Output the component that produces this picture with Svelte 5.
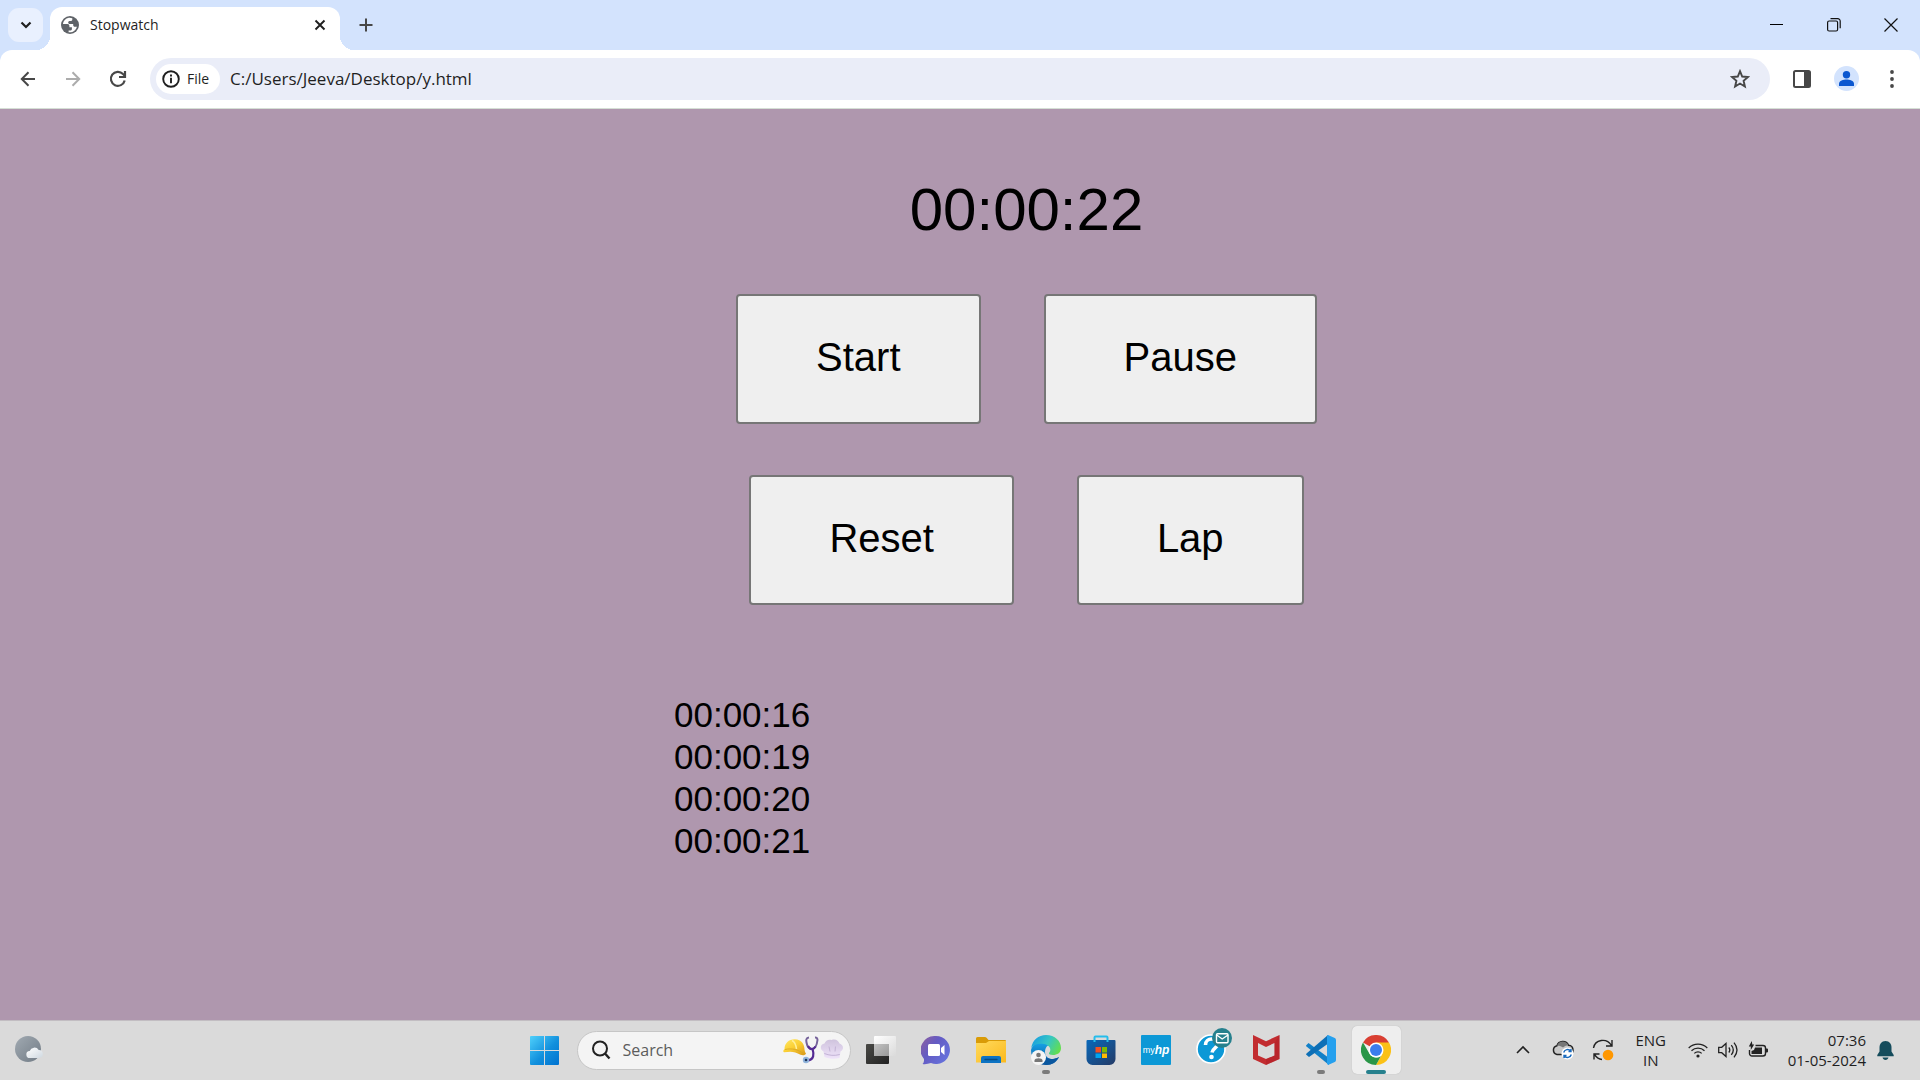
<script>
  let address = $state('C:/Users/Jeeva/Desktop/y.html');
  let query = $state('');
  let elapsed = $state('00:00:22');
  const laps = ['00:00:16', '00:00:19', '00:00:20', '00:00:21'];
</script>

<div class="screen">
  <header>
    <div class="tabstrip">
      <button class="tab-search" aria-label="Search tabs">
        <svg width="20" height="20" viewBox="0 0 20 20"><path d="M5.500 7.500 10 12l4.500-4.500" fill="none" stroke="#1f1f1f" stroke-width="2.200" /></svg>
      </button>
      <div class="tab">
        <svg width="18" height="18" viewBox="0 0 18 18">
          <circle cx="9" cy="9" r="9" fill="#5f6368" />
          <path d="M7.800 1.800C4.500 2.500 2.300 5 1.900 8l4.600.1c1.300 0 1.900.8 1.900 1.900v1.200h2.500v1.700c0 1-.8 1.500-1.900 1.500H7.600v1.800c4 .6 7.400-2 8.300-5.500h-2c-1.100 0-1.700-.8-1.700-1.800V7.900H8.900c-1.200 0-1.700-.7-1.700-1.500 0-1 .7-1.500 1.700-1.500h1.200c.8 0 1.200-.6 1.200-1.300V2.300c-1.200-.5-2.300-.7-3.500-.5z" fill="#fff" />
        </svg>
        <span class="tab-title">Stopwatch</span>
        <button class="icon small" aria-label="Close tab">
          <svg width="12" height="12" viewBox="0 0 12 12"><path d="m1.500 1.500 9 9m0-9-9 9" stroke="#1f1f1f" stroke-width="1.900" /></svg>
        </button>
      </div>
      <button class="icon new-tab" aria-label="New tab">
        <svg width="14" height="14" viewBox="0 0 14 14"><path d="M7 .5v13M.5 7h13" stroke="#474747" stroke-width="2" /></svg>
      </button>
      <div class="window-buttons">
        <button aria-label="Minimize"><svg width="14" height="14" viewBox="0 0 14 14"><path d="M0 6.500h13" stroke="#000" /></svg></button>
        <button aria-label="Restore"><svg width="14" height="14" viewBox="0 0 14 14" fill="none" stroke="#111" stroke-width="1.200"><rect x=".6" y="3" width="10" height="10" rx="1.500" /><path d="M3.500.7h7.200a2.500 2.500 0 0 1 2.500 2.500v7" /></svg></button>
        <button aria-label="Close"><svg width="14" height="14" viewBox="0 0 14 14"><path d="m.5.5 13 13m0-13-13 13" stroke="#111" stroke-width="1.200" /></svg></button>
      </div>
    </div>
    <div class="toolbar">
      <button class="nav" aria-label="Back"><svg width="16" height="16" viewBox="0 0 16 16" fill="none" stroke="#474747" stroke-width="2"><path d="M15 8H2M8.500 1.300 1.800 8l6.700 6.700" /></svg></button>
      <button class="nav" aria-label="Forward" disabled><svg width="16" height="16" viewBox="0 0 16 16" fill="none" stroke="#acacac" stroke-width="2"><path d="M1 8h13M7.500 1.300 14.200 8l-6.700 6.700" /></svg></button>
      <button class="nav" aria-label="Reload"><svg width="18" height="18" viewBox="0 0 18 18" fill="none" stroke="#474747" stroke-width="2.200"><path d="M15.700 10.500A7 7 0 1 1 14 4l2 2" /><path d="M16 1v6h-6" /></svg></button>
      <div class="omnibox">
        <button class="chip">
          <svg width="18" height="18" viewBox="0 0 18 18"><circle cx="9" cy="9" r="7.800" fill="none" stroke="#1f1f1f" stroke-width="1.900" /><path d="M9 7.800v5.400M9 4.600v2" stroke="#1f1f1f" stroke-width="1.900" /></svg>
          File
        </button>
        <input class="address" aria-label="Address" spellcheck="false" bind:value={address} />
        <button class="icon" aria-label="Bookmark this page">
          <svg width="20" height="20" viewBox="0 0 20 20"><path d="m10 2.200 2.200 5.300 5.700.5-4.300 3.800 1.300 5.700-4.900-3-4.900 3 1.300-5.700L2.100 8l5.700-.5z" fill="none" stroke="#474747" stroke-width="1.900" /></svg>
        </button>
      </div>
      <div class="actions">
        <button class="icon" aria-label="Side panel"><svg width="18" height="18" viewBox="0 0 18 18"><rect x="1" y="1" width="16" height="16" rx="1.500" fill="none" stroke="#474747" stroke-width="2" /><path d="M11 1h6v16h-6z" fill="#474747" /></svg></button>
        <button class="icon" aria-label="Profile"><svg width="25" height="25" viewBox="0 0 25 25"><circle cx="12.500" cy="12.500" r="12.500" fill="#d3e3fd" /><circle cx="12.500" cy="8.700" r="3.700" fill="#0b57d0" /><path d="M5 20v-2.200c0-3 4.500-4.300 7.500-4.300s7.500 1.300 7.500 4.300V20z" fill="#0b57d0" /></svg></button>
        <button class="icon" aria-label="Menu"><svg width="18" height="18" viewBox="0 0 18 18" fill="#474747"><circle cx="9" cy="2" r="1.900" /><circle cx="9" cy="9" r="1.900" /><circle cx="9" cy="16" r="1.900" /></svg></button>
      </div>
    </div>
  </header>

  <main>
    <div class="stopwatch">
      <div class="time">{elapsed}</div>
      <div class="row">
        <button class="control">Start</button>
        <button class="control">Pause</button>
      </div>
      <div class="row">
        <button class="control">Reset</button>
        <button class="control">Lap</button>
      </div>
      <ul>
        {#each laps as lap}
          <li>{lap}</li>
        {/each}
      </ul>
    </div>
  </main>

  <footer>
    <button class="weather" aria-label="Weather">
      <svg width="28" height="28" viewBox="0 0 28 28">
        <defs>
          <linearGradient id="moon" x1="0" y1="0" x2="1" y2="1"><stop stop-color="#a1aab2" /><stop offset="1" stop-color="#717b85" /></linearGradient>
          <linearGradient id="cloud" x1="0" y1="0" x2="1" y2="1"><stop stop-color="#fff" /><stop offset="1" stop-color="#cfd8e0" /></linearGradient>
        </defs>
        <circle cx="13" cy="13" r="13" fill="url(#moon)" />
        <path d="M15 22a3.500 3.500 0 0 1-.3-7 5 5 0 0 1 9-1 4 4 0 0 1 .3 8z" fill="url(#cloud)" />
      </svg>
    </button>

    <nav class="apps" aria-label="Taskbar">
      <button class="app" aria-label="Start menu">
        <svg width="29" height="29" viewBox="0 0 29 29">
          <defs><linearGradient id="win" gradientUnits="userSpaceOnUse" x1="0" y1="0" x2="29" y2="29"><stop stop-color="#4fd0fb" /><stop offset=".55" stop-color="#1290dd" /><stop offset="1" stop-color="#0072d0" /></linearGradient></defs>
          <path d="M1 0h13v14H0V1a1 1 0 0 1 1-1zM15 0h13a1 1 0 0 1 1 1v13H15zM0 15h14v14H1a1 1 0 0 1-1-1zM15 15h14v13a1 1 0 0 1-1 1H15z" fill="url(#win)" />
        </svg>
      </button>
      <label class="search">
        <svg width="20" height="20" viewBox="0 0 20 20" fill="none" stroke="#222"><circle cx="9" cy="8.500" r="7" stroke-width="2" /><path d="m14 13.500 4.500 5" stroke-width="2.400" /></svg>
        <input aria-label="Search" placeholder="Search" bind:value={query} />
        <svg width="61" height="28" viewBox="0 0 61 28">
          <defs>
            <linearGradient id="hat" x1="0" y1="0" x2=".8" y2="1"><stop stop-color="#ffe866" /><stop offset=".5" stop-color="#fbd035" /><stop offset="1" stop-color="#dfa01c" /></linearGradient>
            <linearGradient id="chef" x1="0" y1="0" x2="0" y2="1"><stop stop-color="#cfc3dd" /><stop offset="1" stop-color="#efe3fa" /></linearGradient>
          </defs>
          <path d="M1.500 13C1.500 7 6 3 12 3.200c6.500.3 9.500 5 9.500 10.300.2 2 .8 3 1.500 4-.5 1.700-3 2.300-5.500 1.300C12 15.500 8 15 1 16.300-.3 15.500.3 14 1.500 13z" fill="url(#hat)" />
          <path d="M9 4.500c3 1.500 4 4.500 4.500 8.500" fill="none" stroke="#fff09a" stroke-width="1.500" />
          <path d="M2 13.500c7-1.500 13 0 18.500 4" fill="none" stroke="#d6a425" stroke-width=".8" />
          <path d="M26 1.500c-3 .4-3 2.500-2.500 5 .7 4 3 6.500 5.500 6.500 4 0 5-5 5.500-9 0-2-1-2.600-2.500-2.500" fill="none" stroke="#75629a" stroke-width="2" />
          <path d="M25 10c2 4 5.500 4 7.500.5m-3 2c1.500 5.500 2 11.500-5.500 12" fill="none" stroke="#542a94" stroke-width="2.200" />
          <circle cx="23" cy="24" r="3.200" fill="#91b4dc" /><circle cx="23" cy="24" r="1.300" fill="#1d3659" />
          <path d="m41.500 21-1-5.500C36.500 13.500 37 8 41.500 7.500 42.500 4 46 3 48.500 4c4-1.500 7 .5 8 3.500 4.500 1.500 4.500 6.500 1 8l-1 6.500c-5 1.300-10 1-15-1z" fill="url(#chef)" />
          <path d="M41.300 17.500c5 2 10 2.500 15.500 1M46 10.500l1 5m5.500-5-.5 5" fill="none" stroke="#c3b3d6" />
        </svg>
      </label>
      <button class="app" aria-label="Task view">
        <svg width="30" height="30" viewBox="0 0 30 30">
          <defs>
            <linearGradient id="dark" x1="0" y1="0" x2="1" y2="1"><stop stop-color="#494946" /><stop offset="1" stop-color="#222" /></linearGradient>
            <linearGradient id="glass" x1="0" y1="0" x2="1" y2="1"><stop stop-color="#fff" /><stop offset="1" stop-color="#dadada" /></linearGradient>
            <linearGradient id="overlap" x1="0" y1="0" x2="1" y2="1"><stop stop-color="#c2c2c2" /><stop offset="1" stop-color="#999" /></linearGradient>
          </defs>
          <rect y="9" width="23" height="20" rx="1" fill="url(#dark)" />
          <rect x="8" y="1" width="22" height="20" rx="1" fill="url(#glass)" />
          <path d="M8 9h15v12H8z" fill="url(#overlap)" />
        </svg>
      </button>
      <button class="app" aria-label="Chat">
        <svg width="30" height="30" viewBox="0 0 30 30">
          <defs><linearGradient id="chat" x1="0" y1="0" x2="1" y2=".7"><stop stop-color="#91609d" /><stop offset=".45" stop-color="#645bc3" /><stop offset="1" stop-color="#6672dc" /></linearGradient></defs>
          <path d="M15 1a14 14 0 1 1-5 27.100C7 29 4 29.500 1.500 29c1.300-1.500 1.700-3 1.500-5A14 14 0 0 1 15 1z" fill="url(#chat)" />
          <rect x="7" y="9" width="12" height="12" rx="1.500" fill="#fff" /><path d="m20 13 3.500-3v10L20 17z" fill="#fff" />
        </svg>
      </button>
      <button class="app" aria-label="File Explorer">
        <svg width="30" height="30" viewBox="0 0 30 30">
          <defs><linearGradient id="folder" x1="0" y1="0" x2="1" y2="1"><stop stop-color="#ffda5d" /><stop offset="1" stop-color="#fbb91d" /></linearGradient></defs>
          <path d="M0 3.500A1.500 1.500 0 0 1 1.500 2H9c1 0 2 1 3.500 3H29a1 1 0 0 1 1 1v3H0z" fill="#d99b07" />
          <path d="M0 8h10l3-2h17v21.500H0z" fill="url(#folder)" />
          <path d="M5 28v-5a2 2 0 0 1 2-2h16a2 2 0 0 1 2 2v5z" fill="#0d73c3" /><path d="M9 24.500h12" stroke="#064b83" stroke-width="1.300" stroke-linecap="round" />
        </svg>
      </button>
      <button class="app running" aria-label="Edge">
        <svg width="30" height="30" viewBox="0 0 30 30">
          <defs>
            <linearGradient id="edgeTop" x1="0" y1=".3" x2="1" y2=".7"><stop stop-color="#199ee0" /><stop offset=".5" stop-color="#35c6c4" /><stop offset="1" stop-color="#66df49" /></linearGradient>
            <linearGradient id="edgeLow" x1="0" y1="0" x2="0" y2="1"><stop stop-color="#16a5e8" /><stop offset="1" stop-color="#0b549e" /></linearGradient>
          </defs>
          <path d="M0 15c0 9 6.500 15 15 15 6 0 11-3 13-8-6 4-14 2-14-5 0-6 4-7 4-7C12 5 2 7 0 15z" fill="url(#edgeLow)" />
          <path d="M12 15c-2 7 6 12 16 7-3 5-7 8-13 8-7-3-7-11-3-15z" fill="#0a579f" />
          <path d="M.2 13C1.500 5 7.500 0 15 0c9 0 15 6 15 13 0 5-4 7-8 7-3 0-4.500-1-4-2 3-3 1-8-5-9C8 8 3 9 .2 13z" fill="url(#edgeTop)" />
          <circle cx="7.500" cy="22.500" r="7.500" fill="#f5f5f5" /><circle cx="7.500" cy="20" r="2.300" fill="#777" /><path d="M3.500 27v-1.500c0-3 8-3 8 0V27z" fill="#777" />
        </svg>
      </button>
      <button class="app" aria-label="Microsoft Store">
        <svg width="30" height="30" viewBox="0 0 30 30">
          <defs><linearGradient id="store" x1="0" y1="0" x2="1" y2="1"><stop stop-color="#0868ba" /><stop offset="1" stop-color="#253b66" /></linearGradient></defs>
          <path d="M1.500 5h27a1 1 0 0 1 1 1v18a6 6 0 0 1-6 6h-17a6 6 0 0 1-6-6V6a1 1 0 0 1 1-1z" fill="url(#store)" />
          <path d="M8.500 7V2.500a1 1 0 0 1 1-1h11a1 1 0 0 1 1 1V7" fill="none" stroke="#25bdec" stroke-width="2" />
          <path d="M9.500 12H15v5.500H9.500z" fill="#f25022" /><path d="M16 12h5v5.500h-5z" fill="#7fba00" /><path d="M9.500 18.500H15V23H9.500z" fill="#00a4ef" /><path d="M16 18.500h5V23h-5z" fill="#ffb900" />
        </svg>
      </button>
      <button class="app" aria-label="myHP"><span class="hp">my<b>hp</b></span></button>
      <button class="app" aria-label="HP Support">
        <svg class="wide" width="36" height="40" viewBox="0 0 36 40">
          <circle cx="15" cy="22" r="14" fill="#0c98d6" stroke="#fff" stroke-width="1.600" />
          <path d="M9.500 18c0-4 3-6 6-6 4 0 6 2 6 5 0 4-5 4-5.500 8.500" fill="none" stroke="#fff" stroke-width="3.600" /><circle cx="15.500" cy="30" r="2.300" fill="#fff" />
          <circle cx="26" cy="11" r="10" fill="#26808d" />
          <rect x="20.500" y="6.800" width="11.500" height="9" rx="1" fill="none" stroke="#fff" stroke-width="1.400" /><path d="m20.700 8 5.500 4L32 8" fill="none" stroke="#fff" stroke-width="1.400" />
        </svg>
      </button>
      <button class="app" aria-label="McAfee">
        <svg width="30" height="30" viewBox="0 0 30 30"><path fill-rule="evenodd" d="m2 0 13 6.200L28.500 0v24L15 30 2 24zM7 8v12.500l8 3.600 8.500-3.600V8L15 12z" fill="#c22c30" /><path d="M28.500 0v24L15 30v-5.900l8.500-3.600V8z" fill="#a91b22" opacity=".35" /></svg>
      </button>
      <button class="app running" aria-label="Visual Studio Code">
        <svg width="30" height="30" viewBox="0 0 30 30">
          <path d="M0 10.500 2.500 8 23 23v7L.5 11.500z" fill="#1180c8" /><path d="M.5 18.500 22 0l1 8L3 22 0 19.500z" fill="#0d6fb6" /><path d="m22 0 6.800 3q1.200.5 1.200 2v20q0 1.500-1.200 2L22 30l-1-1.500V1z" fill="#25a0ee" />
        </svg>
      </button>
      <button class="app active" aria-label="Chrome">
        <svg width="30" height="30" viewBox="0 0 30 30">
          <path d="M15 15 2 7.500a15 15 0 0 1 26 0z" fill="#d93f32" />
          <path d="M15 7.500h13A15 15 0 0 1 15 30l6.500-11.300z" fill="#fbc116" />
          <path d="M2 7.500 8.500 18.700c1.500 2.600 4 3.800 6.500 3.800 2.200 0 4-.5 5-1.500L15 30A15 15 0 0 1 2 7.500z" fill="#2a9648" />
          <circle cx="15" cy="15" r="7.500" fill="#fff" /><circle cx="15" cy="15" r="6" fill="#3b7ded" />
        </svg>
      </button>
    </nav>

    <div class="tray">
      <button class="tray-icon" aria-label="Hidden icons"><svg width="14" height="10" viewBox="0 0 14 10"><path d="m1 8 6-6 6 6" fill="none" stroke="#222" stroke-width="1.600" /></svg></button>
      <button class="tray-icon" aria-label="OneDrive">
        <svg width="22" height="20" viewBox="0 0 22 20">
          <path d="M5 14.500a4.500 4.500 0 0 1 0-8.800c1.500-5 9-6 11.500-.5 3 0 4.500 2.500 4.500 5a4 4 0 0 1-4 4.300z" fill="#c9c9c9" stroke="#222" stroke-width="1.500" />
          <path d="M5 5.700c2-5.500 9-5.500 11.500-.5-3 0-4 1-5.500 2.300C9 5.800 7 5.500 5 5.700z" fill="#777" />
          <circle cx="15.500" cy="13.500" r="6" fill="#fff" /><path d="M11.700 12.500a4 4 0 0 1 7-1.500M19 9v2.500h-2.500m2.800 3a4 4 0 0 1-7 1.500M12 18v-2.500h2.500" fill="none" stroke="#1769bd" stroke-width="1.400" />
        </svg>
      </button>
      <button class="tray-icon" aria-label="Windows Update">
        <svg width="22" height="22" viewBox="0 0 22 22" fill="none" stroke="#222" stroke-width="1.400"><path d="M1.500 9C3 .5 14.500-1.500 19.500 6.500M20 1v6h-6M10 20.500c-3-.2-5.500-2-7.500-5M2 20.500v-5.500h5.500" /><circle cx="16" cy="16" r="5.300" fill="#ff9700" stroke="none" /></svg>
      </button>
      <button class="language">ENG<br />IN</button>
      <button class="status" aria-label="Network, volume and battery">
        <svg width="20" height="18" viewBox="0 0 20 18" fill="none" stroke="#222" stroke-width="1.300"><path d="M.7 7a13 13 0 0 1 18.600 0M3.500 9.700a9.300 9.300 0 0 1 13 0M6.300 12.400a5.300 5.300 0 0 1 7.400 0" /><circle cx="10" cy="15" r="1.600" fill="#222" stroke="none" /></svg>
        <svg width="20" height="18" viewBox="0 0 20 18" fill="none" stroke="#222" stroke-width="1.300"><path d="M.7 6.300h3L8 2.500v13l-4.300-3.800h-3zM10.800 6.500q2 2.500 0 5M13.300 4.200q4 4.800 0 9.600M16 1.700q6 7.300 0 14.600" /></svg>
        <svg width="20" height="18" viewBox="0 0 20 18"><path d="M7.500 4.500H15A2.500 2.500 0 0 1 17.500 7v5.500A2.500 2.500 0 0 1 15 15H4a2.500 2.500 0 0 1-2.500-2.500V9" fill="none" stroke="#222" stroke-width="1.400" /><path d="M7 6.500h7v6.500H3.500v-3L6 9zM18 7.500h1a1 1 0 0 1 1 1v2a1 1 0 0 1-1 1h-1zM3.800 0 .8 5.500h2V9l3.400-5.500H4.300z" fill="#222" /></svg>
      </button>
      <button class="clock">07:36<br />01-05-2024</button>
      <button class="bell" aria-label="Notifications"><svg width="17" height="19" viewBox="0 0 17 19" fill="#154c5c"><path d="M8.500 0C4.500 0 2.500 3 2.500 6.500v4L.3 14v1.300h16.400V14l-2.200-3.500v-4C14.500 3 12.500 0 8.500 0zM5.500 16.500h6c-.4 1.600-1.500 2.500-3 2.500s-2.600-.9-3-2.500z" /></svg></button>
    </div>
  </footer>
</div>

<style>
  :global(body) { margin: 0; }
  * { box-sizing: border-box; }
  .screen {
    display: flex;
    flex-direction: column;
    min-height: 100vh;
    font-family: 'Open Sans', 'Noto Sans', sans-serif;
    color: #1f1f1f;
    background: #af97ae;
  }
  button, input { font: inherit; color: inherit; }
  button { border: 0; background: none; padding: 0; }
  svg { display: block; flex: none; }
  header { background: #d3e3fd; }
  .tabstrip { display: flex; height: 50px; padding-left: 8px; }
  .tab-search {
    display: grid;
    place-items: center;
    width: 35px;
    height: 34px;
    margin-top: 8px;
    border-radius: 11px;
    background: #e9f0fe;
  }
  .tab {
    position: relative;
    display: flex;
    align-items: center;
    width: 290px;
    margin: 7px 0 0 7px;
    padding: 0 10px 7px 11px;
    border-radius: 12px 12px 0 0;
    background: #fff;
  }
  .tab::before, .tab::after {
    content: '';
    position: absolute;
    bottom: 0;
    width: 14px;
    height: 14px;
  }
  .tab::before { right: 100%; background: radial-gradient(circle at 0 0, transparent 14px, #fff 14px); }
  .tab::after { left: 100%; background: radial-gradient(circle at 100% 0, transparent 14px, #fff 14px); }
  .tab-title { flex: 1; margin-left: 11px; font-size: 14px; line-height: 20px; }
  .icon { display: grid; place-items: center; width: 25px; height: 25px; }
  .small { width: 20px; }
  .new-tab { margin: 12px 0 0 13px; }
  .window-buttons { display: flex; margin-left: auto; padding-right: 1px; }
  .window-buttons button { display: grid; place-items: center; width: 57px; height: 49px; }
  .toolbar {
    display: flex;
    align-items: center;
    height: 59px;
    padding: 0 16px 1px 5px;
    border-bottom: 1px solid #d5dfd5;
    border-radius: 12px 12px 0 0;
    background: #fff;
  }
  .nav { display: grid; place-items: center; width: 45px; height: 42px; }
  .omnibox {
    display: flex;
    align-items: center;
    flex: 1;
    height: 42px;
    margin-left: 10px;
    padding: 0 18px 0 6px;
    border-radius: 21px;
    background: #eaedf8;
  }
  .chip {
    display: flex;
    align-items: center;
    gap: 7px;
    width: 64px;
    height: 30px;
    padding-left: 6px;
    border-radius: 15px;
    background: #fff;
    font-size: 14px;
  }
  .address {
    flex: 1;
    min-width: 0;
    margin-left: 10px;
    padding: 0;
    border: 0;
    outline: 0;
    background: none;
    font-size: 17px;
  }
  .actions { display: flex; gap: 20px; margin-left: 19px; }

  main {
    flex: 1;
    padding: 62px 0 0 133px;
    font-family: 'Liberation Sans', Arial, sans-serif;
    color: #000;
  }
  .stopwatch { display: flex; flex-direction: column; align-items: center; }
  .time { margin-bottom: 45px; font-size: 60px; line-height: 78px; }
  .row { display: flex; gap: 63px; margin-bottom: 51px; }
  .control {
    height: 130px;
    padding: 0 78px 3px;
    border: 2px solid #767676;
    border-radius: 4px;
    background: #efefef;
    font-size: 40px;
  }
  ul {
    width: 705px;
    margin: 38px 0 0;
    padding: 0;
    list-style: none;
    font-size: 35px;
    line-height: 42px;
  }

  footer {
    display: grid;
    grid-template-columns: 1fr auto 1fr;
    align-items: center;
    height: 60px;
    padding-bottom: 1px;
    border-top: 1px solid #c2bdc2;
    background: #dadada;
  }
  .weather { justify-self: start; margin-left: 15px; }
  .apps { display: flex; align-items: center; }
  .app {
    position: relative;
    display: grid;
    place-items: center;
    width: 49px;
    height: 48px;
    margin: 0 3px;
    border-radius: 5px;
  }
  .active { background: #eeeeee; box-shadow: 0 0 1px #aaa; }
  .running::after, .active::after {
    content: '';
    position: absolute;
    bottom: 0;
    width: 8px;
    height: 4px;
    border-radius: 2px;
    background: #7b7b7b;
  }
  .active::after { width: 20px; background: #26808d; }
  .wide { margin: -6px 0 0 6px; }
  .search {
    display: flex;
    align-items: center;
    width: 274px;
    height: 39px;
    margin: 0 3px 0 5px;
    padding: 0 6px 0 13px;
    border: 1px solid #c6c6c6;
    border-radius: 20px;
    background: #f4f4f4;
  }
  .search input {
    flex: 1;
    min-width: 0;
    margin-left: 12px;
    padding: 0;
    border: 0;
    outline: 0;
    background: none;
    font-size: 16px;
  }
  .search input::placeholder { color: #5c5c5c; opacity: 1; }
  .hp {
    display: flex;
    align-items: center;
    justify-content: center;
    width: 30px;
    height: 30px;
    border-radius: 1px;
    background: #0c98d6;
    color: #fff;
    font-family: 'Liberation Sans', Arial, sans-serif;
    font-size: 9px;
    line-height: 14px;
  }
  .hp b { font-size: 12px; font-style: italic; }
  .tray { display: flex; align-items: center; justify-self: end; font-size: 15px; line-height: 20px; }
  .tray-icon { display: grid; place-items: center; width: 40px; height: 48px; }
  .language { width: 56px; text-align: center; }
  .status { display: flex; gap: 10px; margin-left: 9px; }
  .clock { margin-left: 20px; text-align: right; }
  .bell { margin: 0 26px 0 11px; }
</style>
